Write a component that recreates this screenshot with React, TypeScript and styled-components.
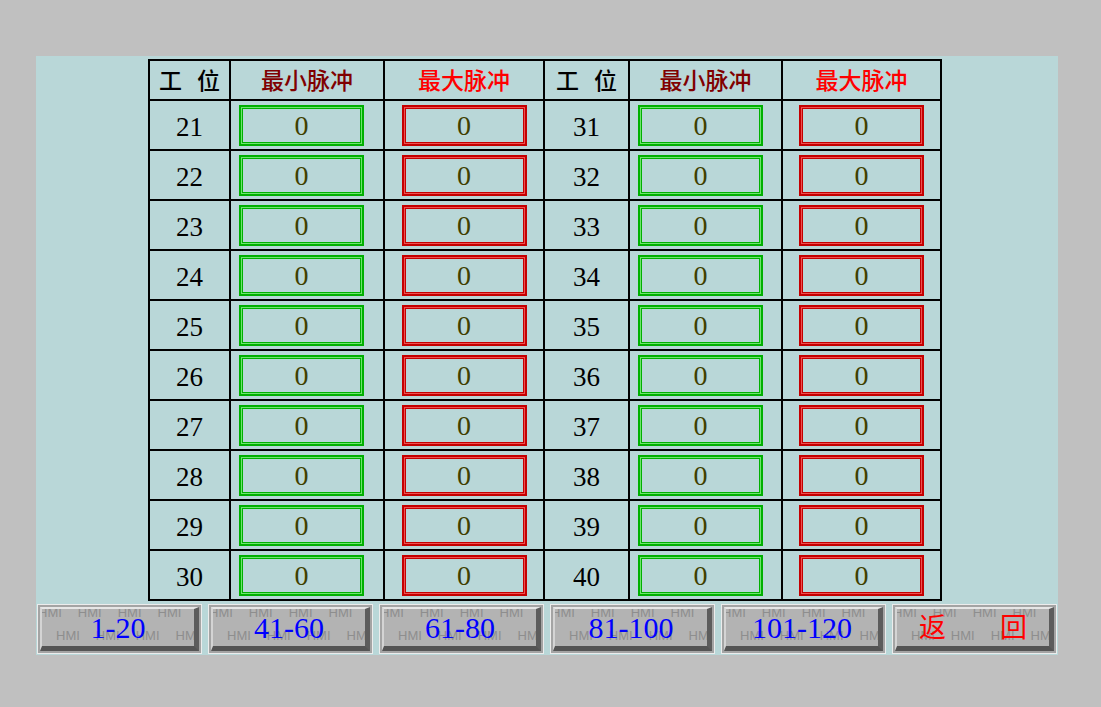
import React from "react";
import styled, { createGlobalStyle } from "styled-components";

const GlobalStyle = createGlobalStyle`
  html, body {
    margin: 0;
    padding: 0;
    background: #c0c0c0;
  }
`;

const Screen = styled.div`
  width: 1101px;
  height: 707px;
  background: #c0c0c0;
  padding-top: 56px;
  padding-left: 36px;
  box-sizing: border-box;
`;

const Panel = styled.div`
  width: 1022px;
  height: 599px;
  background: #b9d7d8;
  box-sizing: border-box;
  padding: 3px 1px 0;
  display: flex;
  flex-direction: column;
`;

const Grid = styled.div`
  display: grid;
  grid-template-columns: 79px 152px 158px 83px 151px 157px;
  grid-template-rows: 38px repeat(10, 48px);
  gap: 2px;
  padding: 2px;
  background: #000;
  width: fit-content;
  margin-left: 111px;
`;

const HeadCell = styled.div<{ $color: string }>`
  background: #b9d7d8;
  display: flex;
  align-items: center;
  justify-content: center;
  padding-bottom: 3px;
  font-family: "Noto Sans CJK SC", "Liberation Serif", serif;
  font-size: 23px;
  font-weight: 500;
  word-spacing: 10px;
  color: ${(p) => p.$color};
  white-space: pre;
`;

const NumCell = styled.div`
  background: #b9d7d8;
  display: flex;
  align-items: center;
  justify-content: center;
  font-family: "Liberation Serif", serif;
  font-size: 27px;
  color: #000;
  padding-top: 4px;
`;

const BoxCell = styled.div<{ $inset?: number }>`
  background: #b9d7d8;
  display: flex;
  align-items: center;
  justify-content: ${(p) => (p.$inset !== undefined ? "flex-start" : "center")};
  padding-left: ${(p) => p.$inset ?? 0}px;
`;

const tones = {
  green: { line: "#00b000", glow: "#6ee46e" },
  red: { line: "#c40000", glow: "#ee5050" },
};

const ValueBox = styled.div<{ $tone: "green" | "red" }>`
  width: 125px;
  height: 41px;
  box-sizing: border-box;
  border: 2px solid ${(p) => tones[p.$tone].line};
  box-shadow: inset 0 0 0 1px ${(p) => tones[p.$tone].glow},
    inset 0 0 0 2px ${(p) => tones[p.$tone].line};
  display: flex;
  align-items: center;
  justify-content: center;
  padding-top: 1px;
  font-family: "Liberation Serif", serif;
  font-size: 28px;
  color: #3f3f00;
`;

const ButtonRow = styled.div`
  display: grid;
  grid-template-columns: repeat(6, 165px);
  gap: 6px;
  margin-top: 3px;
`;

const PageButton = styled.button`
  height: 50px;
  box-sizing: border-box;
  padding: 2px;
  border: 1px solid #ececec;
  background: #a4a4a4;
  cursor: pointer;
`;

const Face = styled.div`
  position: relative;
  height: 100%;
  box-sizing: border-box;
  background: #b3b3b3;
  border-top: 2px solid #e6e6e6;
  border-left: 2px solid #d4d4d4;
  border-right: 5px solid #5c5c5c;
  border-bottom: 5px solid #545454;
  overflow: hidden;
  display: flex;
  align-items: center;
  justify-content: center;
`;

const Watermark = styled.div`
  position: absolute;
  inset: 0;
  overflow: hidden;
  font-family: "Liberation Sans", sans-serif;
  font-size: 13px;
  color: #8e8e8e;
  pointer-events: none;
`;

const MarkRow = styled.div<{ $shift: number }>`
  display: flex;
  gap: 16px;
  margin-left: ${(p) => p.$shift}px;
  margin-top: ${(p) => (p.$shift < 0 ? -3 : 10)}px;
  white-space: nowrap;
  line-height: 13px;
`;

const Label = styled.span<{ $color: string; $size: number }>`
  position: relative;
  font-family: "Liberation Serif", "Noto Sans CJK SC", serif;
  font-size: ${(p) => p.$size}px;
  color: ${(p) => p.$color};
  line-height: 1;
  margin-top: 1px;
`;

const stations = Array.from({ length: 10 }, (_, i) => i);
const pages = [
  { text: "1-20", color: "#0000ff", size: 30 },
  { text: "41-60", color: "#0000ff", size: 30 },
  { text: "61-80", color: "#0000ff", size: 30 },
  { text: "81-100", color: "#0000ff", size: 30 },
  { text: "101-120", color: "#0000ff", size: 30 },
  { text: "返\u3000\u3000回", color: "#ff0000", size: 27 },
];

function Marks() {
  const marks = Array.from({ length: 5 }, (_, i) => <span key={i}>HMI</span>);
  return (
    <Watermark>
      <MarkRow $shift={-4}>{marks}</MarkRow>
      <MarkRow $shift={14}>{marks}</MarkRow>
    </Watermark>
  );
}

export default function App() {
  return (
    <>
      <GlobalStyle />
      <Screen>
        <Panel>
          <Grid>
            <HeadCell $color="#000">工 位</HeadCell>
            <HeadCell $color="#800000">最小脉冲</HeadCell>
            <HeadCell $color="#ff0000">最大脉冲</HeadCell>
            <HeadCell $color="#000">工 位</HeadCell>
            <HeadCell $color="#800000">最小脉冲</HeadCell>
            <HeadCell $color="#ff0000">最大脉冲</HeadCell>
            {stations.map((i) => (
              <React.Fragment key={i}>
                <NumCell>{21 + i}</NumCell>
                <BoxCell $inset={8}>
                  <ValueBox $tone="green">0</ValueBox>
                </BoxCell>
                <BoxCell>
                  <ValueBox $tone="red">0</ValueBox>
                </BoxCell>
                <NumCell>{31 + i}</NumCell>
                <BoxCell $inset={8}>
                  <ValueBox $tone="green">0</ValueBox>
                </BoxCell>
                <BoxCell>
                  <ValueBox $tone="red">0</ValueBox>
                </BoxCell>
              </React.Fragment>
            ))}
          </Grid>
          <ButtonRow>
            {pages.map((p) => (
              <PageButton key={p.text}>
                <Face>
                  <Marks />
                  <Label $color={p.color} $size={p.size}>
                    {p.text}
                  </Label>
                </Face>
              </PageButton>
            ))}
          </ButtonRow>
        </Panel>
      </Screen>
    </>
  );
}
